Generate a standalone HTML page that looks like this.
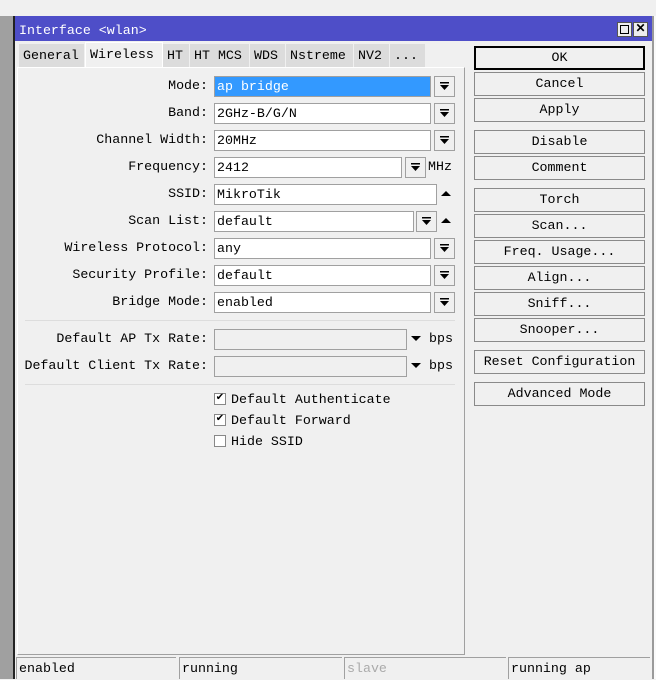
<!DOCTYPE html><html><head><style>
*{margin:0;padding:0;box-sizing:border-box}
body{width:656px;height:679px;background:#f0f0f0;position:relative;overflow:hidden;font-family:"Liberation Mono","Noto Sans CJK SC",monospace;font-size:13.3px;color:#000}
div,span{position:absolute}
.l{text-align:right;white-space:nowrap;line-height:20px}
.in{background:#fff;border:1px solid #a0a0a0;height:21px;line-height:19px;padding-left:2px;white-space:nowrap}
.dis{background:#f0f0f0}
.db{width:21px;height:21px;border:1px solid #a0a0a0;background:#f0f0f0}
.db svg{position:absolute;left:5px;top:5px}
.tri{position:absolute}
.b{left:474px;width:171px;height:24px;border:1px solid #8a8a8a;background:#f0f0f0;text-align:center;line-height:22px}
.t{top:44px;height:23px;background:#dcdcdc;border-right:1px solid #f0f0f0;line-height:24px;padding-left:4px;white-space:nowrap}
.cb{width:12px;height:12px;border:1px solid #888;background:#fff;font-size:10px;line-height:10px;text-align:center}
.s{top:657px;height:22px;border-left:1px solid #a0a0a0;border-top:1px solid #a0a0a0;line-height:22px;padding-left:2px}
</style></head><body>
<div style="left:0;top:16px;width:13px;height:663px;background:#a0a0a0"></div>
<div style="left:13px;top:16px;width:2px;height:663px;background:#222"></div>
<div style="left:15px;top:16px;width:637px;height:663px;background:#f0f0f0"></div>
<div style="left:652px;top:16px;width:2px;height:663px;background:#9a9a9a"></div>
<div style="left:654px;top:16px;width:2px;height:663px;background:#fafafa"></div>
<div style="left:15px;top:16px;width:637px;height:25px;background:#4e4ec8;color:#fff;line-height:30px;padding-left:4px">Interface &lt;wlan&gt;</div>
<div style="left:617px;top:22px;width:15px;height:15px;background:#eee;border:1px solid #555"><div style="left:2px;top:2px;width:9px;height:9px;border:1px solid #000"></div></div>
<div style="left:633px;top:22px;width:15px;height:15px;background:#eee;border:1px solid #555;font-size:12px;line-height:12px;text-align:center;font-weight:bold">✕</div>
<div class="t" style="left:19px;width:66px">General</div>
<div class="t" style="left:85px;top:42px;height:26px;width:78px;background:#f0f0f0;border:1px solid #fff;border-bottom:none;line-height:24px">Wireless</div>
<div class="t" style="left:163px;width:27px">HT</div>
<div class="t" style="left:190px;width:60px">HT MCS</div>
<div class="t" style="left:250px;width:36px">WDS</div>
<div class="t" style="left:286px;width:68px">Nstreme</div>
<div class="t" style="left:354px;width:36px">NV2</div>
<div class="t" style="left:390px;width:36px">...</div>
<div style="left:17px;top:67px;width:448px;height:588px;border:1px solid #a0a0a0;border-left-color:#fff;border-top-color:#fff"></div>

<div class="l" style="right:448px;top:76px">Mode:</div><div class="in" style="left:214px;top:76px;width:217px;background:#3399ff;color:#fff">ap bridge</div><div class="db" style="left:434px;top:76px"><svg width="9" height="9"><rect x="0" y="0" width="9" height="1.5"/><path d="M0 3H9L4.5 8Z"/></svg></div>
<div class="l" style="right:448px;top:103px">Band:</div><div class="in" style="left:214px;top:103px;width:217px">2GHz-B/G/N</div><div class="db" style="left:434px;top:103px"><svg width="9" height="9"><rect x="0" y="0" width="9" height="1.5"/><path d="M0 3H9L4.5 8Z"/></svg></div>
<div class="l" style="right:448px;top:130px">Channel Width:</div><div class="in" style="left:214px;top:130px;width:217px">20MHz</div><div class="db" style="left:434px;top:130px"><svg width="9" height="9"><rect x="0" y="0" width="9" height="1.5"/><path d="M0 3H9L4.5 8Z"/></svg></div>
<div class="l" style="right:448px;top:157px">Frequency:</div><div class="in" style="left:214px;top:157px;width:188px">2412</div><div class="db" style="left:405px;top:157px"><svg width="9" height="9"><rect x="0" y="0" width="9" height="1.5"/><path d="M0 3H9L4.5 8Z"/></svg></div><span style="left:428px;top:157px;line-height:20px">MHz</span>
<div class="l" style="right:448px;top:184px">SSID:</div><div class="in" style="left:214px;top:184px;width:223px">MikroTik</div><svg class="tri" style="left:441px;top:190px" width="10" height="7"><path d="M0 6H10L5 1Z"/></svg>
<div class="l" style="right:448px;top:211px">Scan List:</div><div class="in" style="left:214px;top:211px;width:200px">default</div><div class="db" style="left:416px;top:211px"><svg width="9" height="9"><rect x="0" y="0" width="9" height="1.5"/><path d="M0 3H9L4.5 8Z"/></svg></div><svg class="tri" style="left:441px;top:217px" width="10" height="7"><path d="M0 6H10L5 1Z"/></svg>
<div class="l" style="right:448px;top:238px">Wireless Protocol:</div><div class="in" style="left:214px;top:238px;width:217px">any</div><div class="db" style="left:434px;top:238px"><svg width="9" height="9"><rect x="0" y="0" width="9" height="1.5"/><path d="M0 3H9L4.5 8Z"/></svg></div>
<div class="l" style="right:448px;top:265px">Security Profile:</div><div class="in" style="left:214px;top:265px;width:217px">default</div><div class="db" style="left:434px;top:265px"><svg width="9" height="9"><rect x="0" y="0" width="9" height="1.5"/><path d="M0 3H9L4.5 8Z"/></svg></div>
<div class="l" style="right:448px;top:292px">Bridge Mode:</div><div class="in" style="left:214px;top:292px;width:217px">enabled</div><div class="db" style="left:434px;top:292px"><svg width="9" height="9"><rect x="0" y="0" width="9" height="1.5"/><path d="M0 3H9L4.5 8Z"/></svg></div>
<div style="left:25px;top:320px;width:430px;height:1px;background:#ddd"></div>
<div class="l" style="right:448px;top:329px">Default AP Tx Rate:</div><div class="in dis" style="left:214px;top:329px;width:193px"></div><svg class="tri" style="left:411px;top:335px" width="10" height="7"><path d="M0 1H10L5 6Z"/></svg><span style="left:429px;top:329px;line-height:20px">bps</span>
<div class="l" style="right:448px;top:356px">Default Client Tx Rate:</div><div class="in dis" style="left:214px;top:356px;width:193px"></div><svg class="tri" style="left:411px;top:362px" width="10" height="7"><path d="M0 1H10L5 6Z"/></svg><span style="left:429px;top:356px;line-height:20px">bps</span>
<div style="left:25px;top:384px;width:430px;height:1px;background:#ddd"></div>
<div class="cb" style="left:214px;top:393px">✔</div><span style="left:231px;top:390px;line-height:20px">Default Authenticate</span>
<div class="cb" style="left:214px;top:414px">✔</div><span style="left:231px;top:411px;line-height:20px">Default Forward</span>
<div class="cb" style="left:214px;top:435px"></div><span style="left:231px;top:432px;line-height:20px">Hide SSID</span>

<div class="b" style="top:46px;border:2px solid #000;line-height:20px">OK</div>
<div class="b" style="top:72px">Cancel</div>
<div class="b" style="top:98px">Apply</div>
<div class="b" style="top:130px">Disable</div>
<div class="b" style="top:156px">Comment</div>
<div class="b" style="top:188px">Torch</div>
<div class="b" style="top:214px">Scan...</div>
<div class="b" style="top:240px">Freq. Usage...</div>
<div class="b" style="top:266px">Align...</div>
<div class="b" style="top:292px">Sniff...</div>
<div class="b" style="top:318px">Snooper...</div>
<div class="b" style="top:350px">Reset Configuration</div>
<div class="b" style="top:382px">Advanced Mode</div>

<div class="s" style="left:16px;width:160px">enabled</div>
<div class="s" style="left:179px;width:163px">running</div>
<div class="s" style="left:344px;width:162px;color:#aaa">slave</div>
<div class="s" style="left:508px;width:142px">running ap</div>
</body></html>
